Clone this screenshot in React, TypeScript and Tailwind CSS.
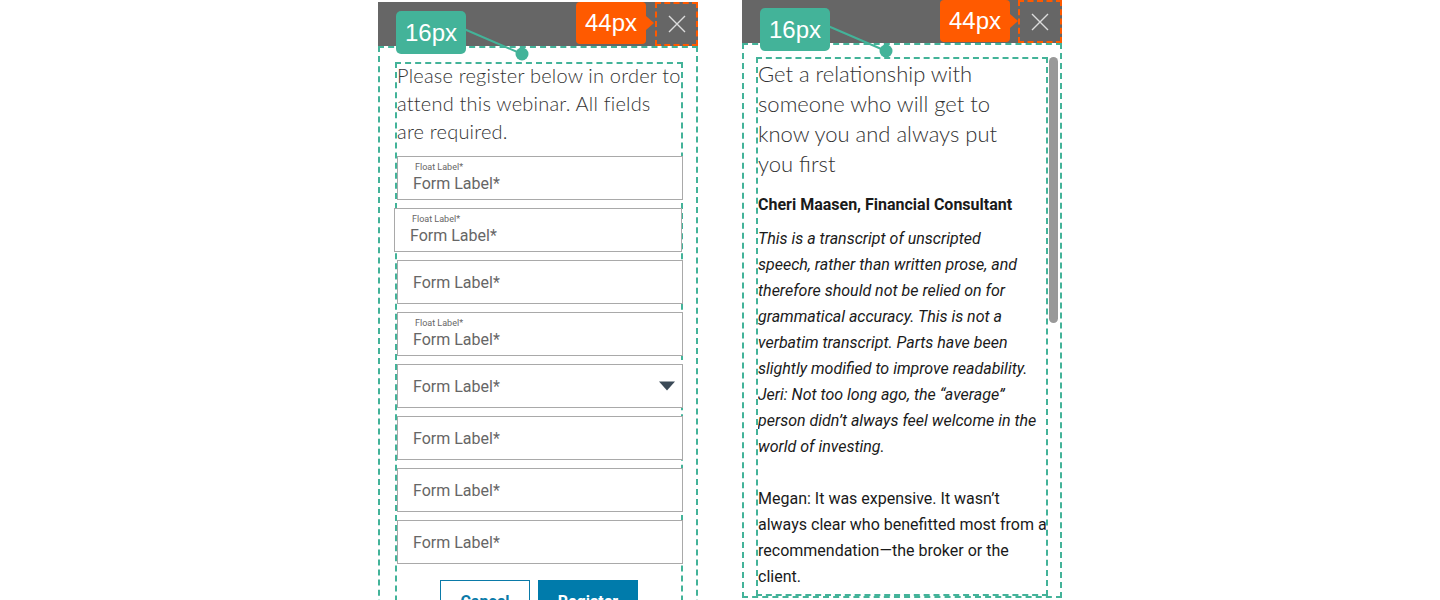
import type { ReactNode } from "react";

const GREEN = "#43b399";

function CloseIcon() {
  return (
    <svg width="18" height="18" viewBox="0 0 18 18" fill="none">
      <path d="M1 1L17 17M17 1L1 17" stroke="#dcdcdc" strokeWidth="1.4" />
    </svg>
  );
}

function Header({ offset }: { offset: string }) {
  return (
    <div className={`h-[44px] bg-[#666666] flex justify-end ${offset}`}>
      <div className="w-[43px] h-full border-2 border-dashed border-[#ff5a00] flex items-center justify-center">
        <CloseIcon />
      </div>
    </div>
  );
}

// spacing annotations that sit over the header
function Annotations({ greenTop, dotY, orangeTop }: { greenTop: number; dotY: number; orangeTop: number }) {
  return (
    <>
      <svg className="absolute left-0 top-0 pointer-events-none" width="320" height="70">
        <line x1="86" y1={greenTop + 18} x2="144" y2={dotY} stroke={GREEN} strokeWidth="2" />
        <circle cx="144" cy={dotY} r="6.5" fill={GREEN} />
      </svg>
      <div
        className="absolute left-[18px] w-[70px] h-[43px] rounded-[5px] bg-[#43b399] flex items-center justify-center text-white text-[24px] font-['Liberation_Sans',sans-serif]"
        style={{ top: greenTop }}
      >
        16px
      </div>
      <div
        className="absolute left-[198px] w-[70px] h-[42px] rounded-[4px] bg-[#ff5a00] flex items-center justify-center text-white text-[24px] font-['Liberation_Sans',sans-serif]"
        style={{ top: orangeTop }}
      >
        44px
        <span className="absolute right-[-8px] top-1/2 -translate-y-1/2 w-0 h-0 border-y-[7px] border-y-transparent border-l-[8px] border-l-[#ff5a00]" />
      </div>
    </>
  );
}

function Field({ float, select, className = "w-[286px]" }: { float?: boolean; select?: boolean; className?: string }) {
  return (
    <div
      className={`relative h-[44px] border border-[#a9a9a9] bg-white flex flex-col justify-center pl-[15px] font-['Roboto',sans-serif] text-[#666] ${className}`}
    >
      {float && <div className="text-[9px] leading-[10px] -mt-[2px] mb-[2px] pl-[2px]">Float Label*</div>}
      <div className="text-[16px] leading-[19px]">Form Label*</div>
      {select && (
        <span className="absolute right-[7px] top-1/2 -translate-y-1/2 w-0 h-0 border-x-[8px] border-x-transparent border-t-[9px] border-t-[#3b4a57]" />
      )}
    </div>
  );
}

function Panel({ children }: { children: ReactNode }) {
  return <div className="relative w-[320px] shrink-0">{children}</div>;
}

export default function App() {
  return (
    <div className="w-[1440px] h-[600px] overflow-hidden bg-white flex justify-center gap-[44px]">
      <Panel>
        <Header offset="mt-[2px]" />
        <div className="h-[600px] border-2 border-dashed border-[#43b399] pl-[15px] pt-[14px]">
          <div className="w-[288px] h-[600px] border-2 border-dashed border-[#43b399]">
            <p className="whitespace-nowrap font-['Lato',sans-serif] font-light text-[20px] leading-[28px] tracking-[0.2px] text-[#333] -mt-[3px]">
              Please register below in order to
              <br />
              attend this webinar. All fields
              <br />
              are required.
            </p>
            <div className="mt-[11px] flex flex-col gap-[8px]">
              <Field float />
              <Field float className="w-[288px] -ml-[3px]" />
              <Field />
              <Field float />
              <Field select />
              <Field />
              <Field />
              <Field />
            </div>
            <div className="mt-[16px] flex justify-center gap-[8px] font-['Roboto',sans-serif] font-bold text-[16px]">
              <button className="w-[90px] h-[44px] border-[1.5px] border-[#0a7aa8] text-[#0a7aa8] bg-white">Cancel</button>
              <button className="w-[100px] h-[44px] bg-[#007bab] text-white">Register</button>
            </div>
          </div>
        </div>
        <Annotations greenTop={11} dotY={54} orangeTop={2} />
      </Panel>

      <Panel>
        <div className="h-[43px] bg-[#666666] flex justify-end">
          <div className="w-[44px] h-full border-2 border-dashed border-[#ff5a00] flex items-center justify-center">
            <CloseIcon />
          </div>
        </div>
        <div className="h-[555px] border-2 border-dashed border-[#43b399] pl-[12px] pt-[12px] flex gap-[1px]">
          <div className="w-[292px] h-[539px] overflow-hidden border-2 border-dashed border-[#43b399] text-[#1a1a1a]">
            <h2 className="whitespace-nowrap font-['Lato',sans-serif] font-light text-[22px] leading-[30px] text-[#333]">
              Get a relationship with
              <br />
              someone who will get to
              <br />
              know you and always put
              <br />
              you first
            </h2>
            <div className="font-['Roboto',sans-serif] text-[16px]">
              <p className="mt-[14px] font-bold leading-[24px]">Cheri Maasen, Financial Consultant</p>
              <p className="mt-[9px] italic leading-[26px] whitespace-nowrap">
                This is a transcript of unscripted
                <br />
                speech, rather than written prose, and
                <br />
                therefore should not be relied on for
                <br />
                grammatical accuracy. This is not a
                <br />
                verbatim transcript. Parts have been
                <br />
                slightly modified to improve readability.
                <br />
                Jeri: Not too long ago, the “average”
                <br />
                person didn’t always feel welcome in the
                <br />
                world of investing.
              </p>
              <p className="mt-[26px] leading-[26px] whitespace-nowrap">
                Megan: It was expensive. It wasn’t
                <br />
                always clear who benefitted most from a
                <br />
                recommendation—the broker or the
                <br />
                client.
              </p>
            </div>
          </div>
          <div className="w-[9px] h-[266px] rounded-full bg-[#999]" />
        </div>
        <Annotations greenTop={8} dotY={51} orangeTop={0} />
      </Panel>
    </div>
  );
}
